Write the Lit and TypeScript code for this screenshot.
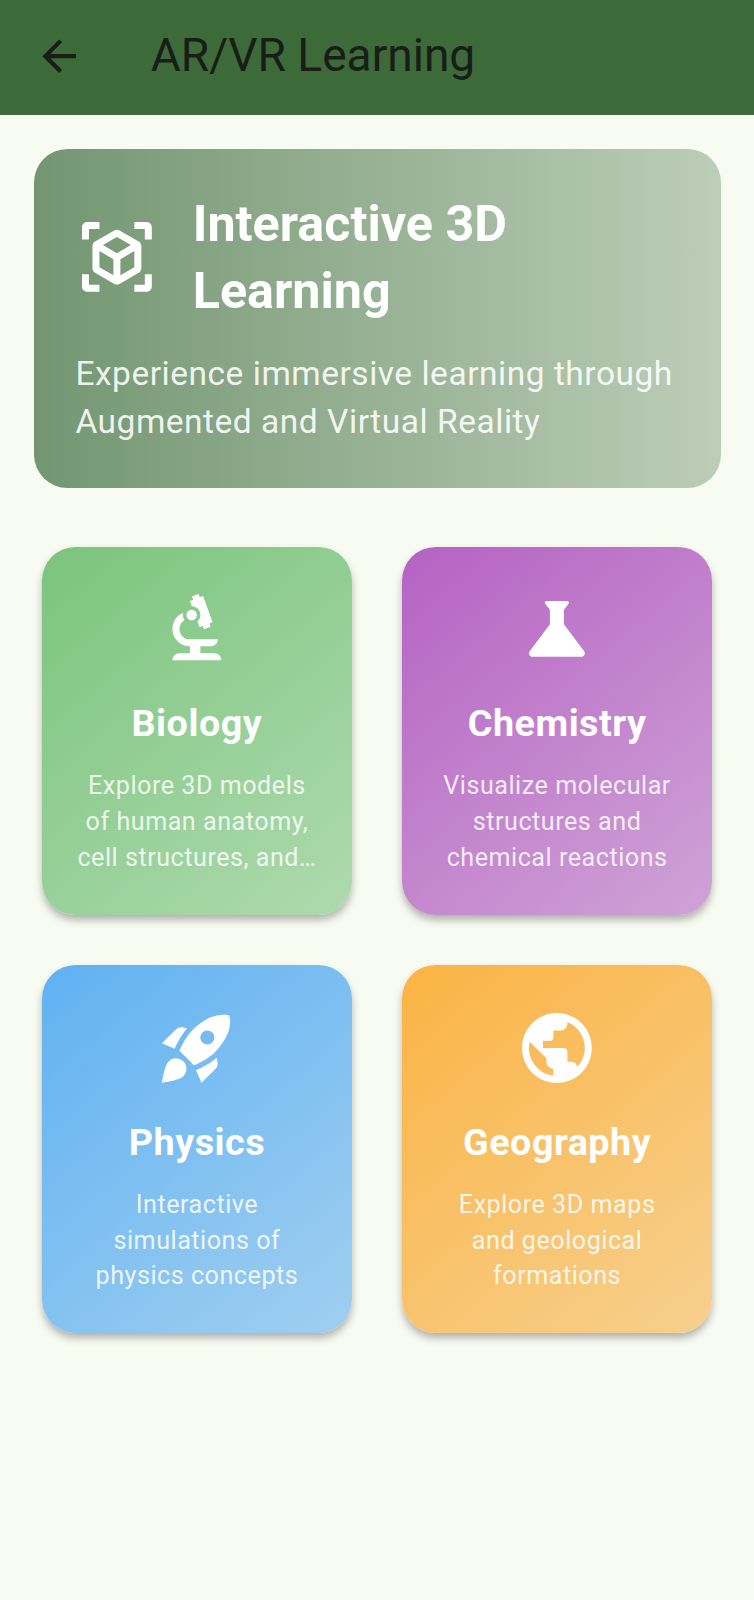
import { html, css, svg, LitElement } from 'lit';
import { customElement, property } from 'lit/decorators.js';

const icons = {
  back: svg`<path d="M20 11H7.83l5.59-5.59L12 4l-8 8 8 8 1.41-1.41L7.83 13H20v-2z"/>`,
  cube: svg`
    <path d="M18.25 7.6l-5.5-3.18c-.46-.27-1.04-.27-1.5 0L5.75 7.6c-.46.27-.75.76-.75 1.3v6.35c0 .54.29 1.03.75 1.3l5.5 3.18c.46.27 1.04.27 1.5 0l5.5-3.18c.46-.27.75-.76.75-1.3V8.9c0-.54-.29-1.03-.75-1.3zM7 14.96v-4.62l4 2.32v4.61l-4-2.31zm5-4.03L8 8.61l4-2.31 4 2.31-4 2.32zm1 6.34v-4.61l4-2.32v4.62l-4 2.31z"/>
    <path d="M7 2H3.5C2.67 2 2 2.67 2 3.5V7h2V4h3V2zM17 2h3.5c.83 0 1.5.67 1.5 1.5V7h-2V4h-3V2zM7 22H3.5c-.83 0-1.5-.67-1.5-1.5V17h2v3h3v2zM17 22h3.5c.83 0 1.5-.67 1.5-1.5V17h-2v3h-3v2z"/>
  `,
  biology: svg`
    <path d="M7 19c-1.1 0-2 .9-2 2h14c0-1.1-.9-2-2-2h-4v-2h3c1.1 0 2-.9 2-2h-8c-1.66 0-3-1.34-3-3 0-1.09.59-2.04 1.46-2.56C8.17 9.03 8 8.54 8 8c0-.21.04-.42.09-.62C6.28 8.13 5 9.92 5 12c0 2.76 2.24 5 5 5v2H7z"/>
    <path d="M10.56 5.51C11.91 5.54 13 6.64 13 8c0 .75-.33 1.41-.85 1.87l.59 1.62.94-.34.34.94 1.88-.68-.34-.94.94-.34-2.74-7.52-.94.34-.34-.94-1.88.68.34.94-.94.35.56 1.53z"/>
    <circle cx="10.5" cy="8" r="1.5"/>
  `,
  chemistry: svg`<path d="M19.8 18.4L14 10.67V6.5l1.35-1.69c.26-.33.03-.81-.39-.81H9.04c-.42 0-.65.48-.39.81L10 6.5v4.17L4.2 18.4c-.49.66-.02 1.6.8 1.6h14c.82 0 1.29-.94.8-1.6z"/>`,
  physics: svg`<path d="M9.19 6.35c-2.04 2.29-3.44 5.58-3.57 5.89L2 10.69l4.05-4.05c.47-.47 1.15-.68 1.81-.55l1.33.26zM11.17 17s3.74-1.55 5.89-3.7c5.4-5.4 4.5-9.62 4.21-10.57-.95-.3-5.17-1.19-10.57 4.21C8.55 9.09 7 12.83 7 12.83L11.17 17zm6.48-2.19c-2.29 2.04-5.58 3.44-5.89 3.57L13.31 22l4.05-4.05c.47-.47.68-1.15.55-1.81l-.26-1.33zM9 18c0 .83-.34 1.58-.88 2.12C6.94 21.3 2 22 2 22s.7-4.94 1.88-6.12A2.996 2.996 0 019 18zm4-9c0-1.1.9-2 2-2s2 .9 2 2-.9 2-2 2-2-.9-2-2z" fill-rule="evenodd"/>`,
  geography: svg`<path d="M12 2C6.48 2 2 6.48 2 12s4.48 10 10 10 10-4.48 10-10S17.52 2 12 2zm-1 17.93c-3.95-.49-7-3.85-7-7.93 0-.62.08-1.21.21-1.79L9 15v1c0 1.1.9 2 2 2v1.93zm6.9-2.54c-.26-.81-1-1.39-1.9-1.39h-1v-3c0-.55-.45-1-1-1H8v-2h2c.55 0 1-.45 1-1V7h2c1.1 0 2-.9 2-2v-.41c2.93 1.19 5 4.06 5 7.41 0 2.08-.8 3.97-2.1 5.39z"/>`,
};

type IconName = keyof typeof icons;

interface Subject {
  id: IconName;
  name: string;
  description: string;
}

const subjects: Subject[] = [
  { id: 'biology', name: 'Biology', description: 'Explore 3D models of human anatomy, cell structures, and…' },
  { id: 'chemistry', name: 'Chemistry', description: 'Visualize molecular structures and chemical reactions' },
  { id: 'physics', name: 'Physics', description: 'Interactive simulations of physics concepts' },
  { id: 'geography', name: 'Geography', description: 'Explore 3D maps and geological formations' },
];

@customElement('app-icon')
export class AppIcon extends LitElement {
  @property() name: IconName = 'back';

  static styles = css`
    :host {
      display: block;
      flex: none;
      width: 83.8px;
      height: 83.8px;
    }

    svg {
      display: block;
      width: 100%;
      height: 100%;
      fill: currentColor;
    }
  `;

  render() {
    return html`<svg viewBox="0 0 24 24" aria-hidden="true">${icons[this.name]}</svg>`;
  }
}

@customElement('subject-card')
export class SubjectCard extends LitElement {
  @property({ attribute: false }) subject!: Subject;

  static styles = css`
    :host {
      display: block;
    }

    .card {
      box-sizing: border-box;
      height: 100%;
      padding: 1.4px 33.5px 0;
      display: flex;
      flex-direction: column;
      align-items: center;
      justify-content: center;
      border-radius: 33.5px;
      color: #fff;
      text-align: center;
      box-shadow: 0 6px 9px -1px rgba(0, 0, 0, 0.27), 0 2px 8px rgba(0, 0, 0, 0.06);
    }

    .biology {
      background: linear-gradient(139.9deg, #7bc47d, #aedaae);
    }

    .chemistry {
      background: linear-gradient(139.9deg, #b562c3, #cfa3d6);
    }

    .physics {
      background: linear-gradient(139.9deg, #60b1f2, #a0cff0);
    }

    .geography {
      background: linear-gradient(139.9deg, #fbb344, #f6d08e);
    }

    .name {
      margin: 24px 0 16.8px;
      font-size: 37.7px;
      line-height: 56.5px;
      font-weight: 700;
      letter-spacing: 0.52px;
    }

    .description {
      margin: 0;
      font-size: 25.13px;
      line-height: 35.7px;
      letter-spacing: 0.52px;
      color: rgba(255, 255, 255, 0.85);
    }
  `;

  render() {
    return html`
      <div class="card ${this.subject.id}">
        <app-icon name="${this.subject.id}"></app-icon>
        <h2 class="name">${this.subject.name}</h2>
        <p class="description">${this.subject.description}</p>
      </div>
    `;
  }
}

@customElement('app-root')
export class AppRoot extends LitElement {
  static styles = css`
    :host {
      display: block;
      min-height: 100vh;
      background: #f8fbf2;
      font-family: Roboto, 'Liberation Sans', sans-serif;
    }

    .bar {
      box-sizing: border-box;
      height: 115px;
      padding: 0 33.5px 2.4px;
      display: flex;
      align-items: center;
      gap: 67px;
      background: #3c6a39;
      color: #191d17;
    }

    .bar app-icon {
      width: 50.3px;
      height: 50.3px;
    }

    .bar h1 {
      margin: 0 0 2px;
      font-size: 46.07px;
      line-height: 58px;
      font-weight: 400;
    }

    main {
      padding: 33.5px;
    }

    .hero {
      padding: 41.9px;
      border-radius: 33.5px;
      background: linear-gradient(90deg, #739671, #bccdb8);
      color: #fff;
    }

    .heading {
      display: flex;
      align-items: center;
      gap: 33.5px;
    }

    .heading h2 {
      margin: 0;
      font-size: 50.27px;
      line-height: 67px;
      font-weight: 700;
    }

    .hero p {
      margin: 25.5px 0 0;
      font-size: 33.5px;
      line-height: 47.9px;
      letter-spacing: 0.52px;
      color: rgba(255, 255, 255, 0.9);
    }

    .grid {
      display: grid;
      grid-template-columns: 1fr 1fr;
      grid-auto-rows: 368.3px;
      gap: 50.2px;
      margin: 59px 8.4px 0;
    }
  `;

  render() {
    return html`
      <header class="bar">
        <app-icon name="back"></app-icon>
        <h1>AR/VR Learning</h1>
      </header>

      <main>
        <section class="hero">
          <div class="heading">
            <app-icon name="cube"></app-icon>
            <h2>Interactive 3D Learning</h2>
          </div>
          <p>Experience immersive learning through Augmented and Virtual Reality</p>
        </section>

        <section class="grid">
          ${subjects.map(s => html`<subject-card .subject=${s}></subject-card>`)}
        </section>
      </main>
    `;
  }
}
